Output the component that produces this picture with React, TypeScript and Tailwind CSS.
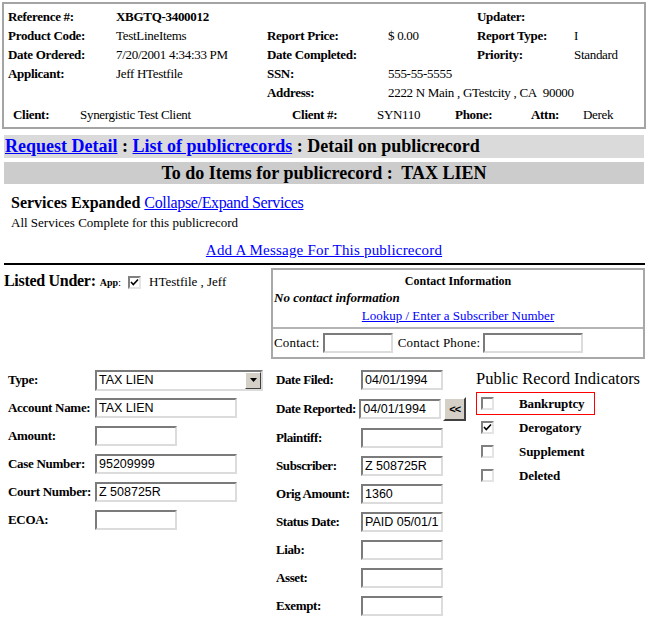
import React from 'react';

const serif = "font-['Liberation_Serif','Times_New_Roman',serif]";

const TextBox = ({ value = '', w }: { value?: string; w: string }) => (
  <input
    readOnly
    value={value}
    className={`${w} h-[20px] bg-white border-2 border-t-[#7b7b7b] border-l-[#7b7b7b] border-b-[#dcdcdc] border-r-[#dcdcdc] px-[2px] text-[12.5px] font-['Liberation_Sans',Arial,sans-serif] text-black outline-none`}
  />
);

const Check = ({ checked = false }: { checked?: boolean }) => (
  <span className="inline-flex w-[13px] h-[13px] bg-white border-2 border-t-[#808080] border-l-[#808080] border-b-[#e4e4e4] border-r-[#e4e4e4] items-center justify-center shrink-0">
    {checked && (
      <svg width="9" height="9" viewBox="0 0 9 9">
        <path d="M1 4 L3.3 6.5 L8 1.5" stroke="#000" strokeWidth="1.6" fill="none" />
      </svg>
    )}
  </span>
);

const TopRow = ({ cells }: { cells: React.ReactNode[] }) => (
  <div className="grid grid-cols-[108px_151px_121px_89px_97px_1fr] h-[19px] items-center">
    {cells.map((c, i) => (
      <div key={i} className="whitespace-nowrap">
        {c}
      </div>
    ))}
  </div>
);

const Lbl = ({ children }: { children: React.ReactNode }) => (
  <span className="font-bold">{children}</span>
);

const LeftRow = ({ label, children }: { label: string; children: React.ReactNode }) => (
  <div className="flex items-center h-[28px]">
    <div className="w-[87px] font-bold text-[13px] tracking-[-0.3px] whitespace-nowrap">{label}</div>
    {children}
  </div>
);

const MidRow = ({ label, children, h = 'h-[28px]' }: { label: string; children: React.ReactNode; h?: string }) => (
  <div className={`flex items-center ${h}`}>
    <div className="w-[85px] font-bold text-[13px] tracking-[-0.4px] whitespace-nowrap">{label}</div>
    {children}
  </div>
);

export default function App() {
  return (
    <div className={`w-[648px] h-[618px] overflow-hidden bg-white text-black ${serif}`}>
      {/* summary box */}
      <div className="ml-[2px] mt-[2px] w-[644px] h-[127px] border-2 border-[#a4a4a4] pl-[4px] pt-[3px] text-[13px] tracking-[-0.3px]">
        <TopRow cells={[<Lbl>Reference #:</Lbl>, <Lbl>XBGTQ-3400012</Lbl>, '', '', <Lbl>Updater:</Lbl>, '']} />
        <TopRow cells={[<Lbl>Product Code:</Lbl>, 'TestLineItems', <Lbl>Report Price:</Lbl>, '$ 0.00', <Lbl>Report Type:</Lbl>, 'I']} />
        <TopRow cells={[<Lbl>Date Ordered:</Lbl>, '7/20/2001 4:34:33 PM', <Lbl>Date Completed:</Lbl>, '', <Lbl>Priority:</Lbl>, 'Standard']} />
        <TopRow cells={[<Lbl>Applicant:</Lbl>, 'Jeff HTestfile', <Lbl>SSN:</Lbl>, '555-55-5555', '', '']} />
        <div className="grid grid-cols-[108px_151px_121px_1fr] h-[19px] items-center">
          <div />
          <div />
          <Lbl>Address:</Lbl>
          <div className="whitespace-nowrap">2222 N Main , GTestcity , CA&nbsp; 90000</div>
        </div>
        <div className="grid grid-cols-[67px_212px_85px_78px_76px_52px_1fr] h-[20px] items-center mt-[3px] pl-[5px] whitespace-nowrap">
          <Lbl>Client:</Lbl>
          <div>Synergistic Test Client</div>
          <Lbl>Client #:</Lbl>
          <div>SYN110</div>
          <Lbl>Phone:</Lbl>
          <Lbl>Attn:</Lbl>
          <div>Derek</div>
        </div>
      </div>

      {/* breadcrumb bars */}
      <div className="ml-[4px] w-[640px] mt-[6px] h-[23px] bg-[#dadada] flex items-center pl-[1px] text-[18px] font-bold whitespace-nowrap">
        <a className="text-[#0000ff] underline">Request Detail</a>
        <span>&nbsp;:&nbsp;</span>
        <a className="text-[#0000ff] underline">List of publicrecords</a>
        <span>&nbsp;: Detail on publicrecord</span>
      </div>
      <div className="ml-[4px] w-[640px] mt-[4px] h-[22px] bg-[#cccccc] flex items-center justify-center text-[18px] font-bold whitespace-pre">
        To do Items for publicrecord :  TAX LIEN
      </div>

      {/* services */}
      <div className="pl-[11px] mt-[10px] h-[18px] flex items-center text-[16px] whitespace-nowrap">
        <span className="font-bold">Services Expanded</span>
        <span>&nbsp;</span>
        <a className="text-[#0000ff] underline tracking-[-0.35px]">Collapse/Expand Services</a>
      </div>
      <div className="pl-[11px] mt-[3px] h-[15px] flex items-center text-[13px] whitespace-nowrap">
        All Services Complete for this publicrecord
      </div>
      <div className="mt-[11px] h-[18px] flex items-center justify-center text-[15px] tracking-[0.2px]">
        <a className="text-[#0000ff] underline">Add A Message For This publicrecord</a>
      </div>
      <div className="ml-[4px] w-[641px] mt-[4px] h-[2px] bg-black" />

      {/* listed under + contact */}
      <div className="flex mt-[3px]">
        <div className="w-[271px] pl-[4px] pt-[3px] flex items-center h-[22px] whitespace-nowrap">
          <span className="font-bold text-[16px] tracking-[-0.3px]">Listed Under:</span>
          <span className="font-bold text-[10px] ml-[4px] mt-[4px]">App</span>
          <span className="text-[11px] mt-[3px]">:</span>
          <span className="ml-[7px] mt-[3px] flex"><Check checked /></span>
          <span className="ml-[8px] mt-[3px] text-[13px]">HTestfile , Jeff</span>
        </div>
        <div className="w-[374px] h-[91px] border-2 border-[#a8a8a8] flex flex-col text-[13px]">
          <div className="h-[57px] flex flex-col">
            <div className="h-[20px] flex items-center justify-center font-bold text-[12px] pt-[2px]">Contact Information</div>
            <div className="h-[16px] flex items-center pl-[1px] font-bold italic">No contact information</div>
            <div className="h-[20px] flex items-center justify-center">
              <a className="text-[#0000ff] underline">Lookup / Enter a Subscriber Number</a>
            </div>
          </div>
          <div className="flex-1 border-t-2 border-[#b4b4b4] flex items-center pl-[1px] tracking-[0.2px] whitespace-nowrap">
            <span>Contact:</span>
            <span className="ml-[3px] flex"><TextBox w="w-[70px]" /></span>
            <span className="ml-[5px]">Contact Phone:</span>
            <span className="ml-[3px] flex"><TextBox w="w-[100px]" /></span>
          </div>
        </div>
      </div>

      {/* form */}
      <div className="flex mt-[7px]">
        <div className="w-[268px] pl-[8px]">
          <LeftRow label="Type:">
            <div className="w-[168px] h-[21px] flex border-2 border-t-[#7b7b7b] border-l-[#7b7b7b] border-b-[#dcdcdc] border-r-[#dcdcdc] bg-white">
              <div className="flex-1 flex items-center pl-[2px] text-[12.5px] font-['Liberation_Sans',Arial,sans-serif]">TAX LIEN</div>
              <div className="w-[16px] h-full bg-[#d4d0c8] border border-t-white border-l-white border-b-[#404040] border-r-[#404040] flex items-center justify-center">
                <svg width="7" height="4" viewBox="0 0 7 4"><path d="M0 0 H7 L3.5 4 Z" fill="#000" /></svg>
              </div>
            </div>
          </LeftRow>
          <LeftRow label="Account Name:"><TextBox w="w-[142px]" value="TAX LIEN" /></LeftRow>
          <LeftRow label="Amount:"><TextBox w="w-[82px]" /></LeftRow>
          <LeftRow label="Case Number:"><TextBox w="w-[142px]" value="95209999" /></LeftRow>
          <LeftRow label="Court Number:"><TextBox w="w-[142px]" value="Z 508725R" /></LeftRow>
          <LeftRow label="ECOA:"><TextBox w="w-[82px]" /></LeftRow>
        </div>

        <div className="w-[198px] pl-[8px]">
          <MidRow label="Date Filed:"><TextBox w="w-[82px]" value="04/01/1994" /></MidRow>
          <MidRow label="Date Reported:" h="h-[30px]">
            <TextBox w="w-[82px]" value="04/01/1994" />
            <div className="ml-[2px] w-[23px] h-[24px] bg-[#d4d0c8] border-2 border-t-white border-l-white border-b-[#404040] border-r-[#404040] flex items-center justify-center text-[11px] font-bold font-['Liberation_Sans',Arial,sans-serif] tracking-[-1px]">
              &lt;&lt;
            </div>
          </MidRow>
          <MidRow label="Plaintiff:"><TextBox w="w-[82px]" /></MidRow>
          <MidRow label="Subscriber:"><TextBox w="w-[82px]" value="Z 508725R" /></MidRow>
          <MidRow label="Orig Amount:"><TextBox w="w-[82px]" value="1360" /></MidRow>
          <MidRow label="Status Date:"><TextBox w="w-[82px]" value="PAID 05/01/1994" /></MidRow>
          <MidRow label="Liab:"><TextBox w="w-[82px]" /></MidRow>
          <MidRow label="Asset:"><TextBox w="w-[82px]" /></MidRow>
          <MidRow label="Exempt:"><TextBox w="w-[82px]" /></MidRow>
        </div>

        <div className="pl-[10px] flex-1">
          <div className="h-[20px] mt-[3px] flex items-center text-[16.5px] whitespace-nowrap">Public Record Indicators</div>
          <div className="mt-[3px] flex flex-col">
            {[
              { t: 'Bankruptcy', c: false, red: true },
              { t: 'Derogatory', c: true, red: false },
              { t: 'Supplement', c: false, red: false },
              { t: 'Deleted', c: false, red: false },
            ].map((r) => (
              <div
                key={r.t}
                className={`w-[119px] h-[23px] mb-[1px] flex items-center pl-[4px] border ${r.red ? 'border-[#ff0000]' : 'border-transparent'}`}
              >
                <Check checked={r.c} />
                <span className="ml-[25px] font-bold text-[13px] tracking-[-0.1px]">{r.t}</span>
              </div>
            ))}
          </div>
        </div>
      </div>
    </div>
  );
}
